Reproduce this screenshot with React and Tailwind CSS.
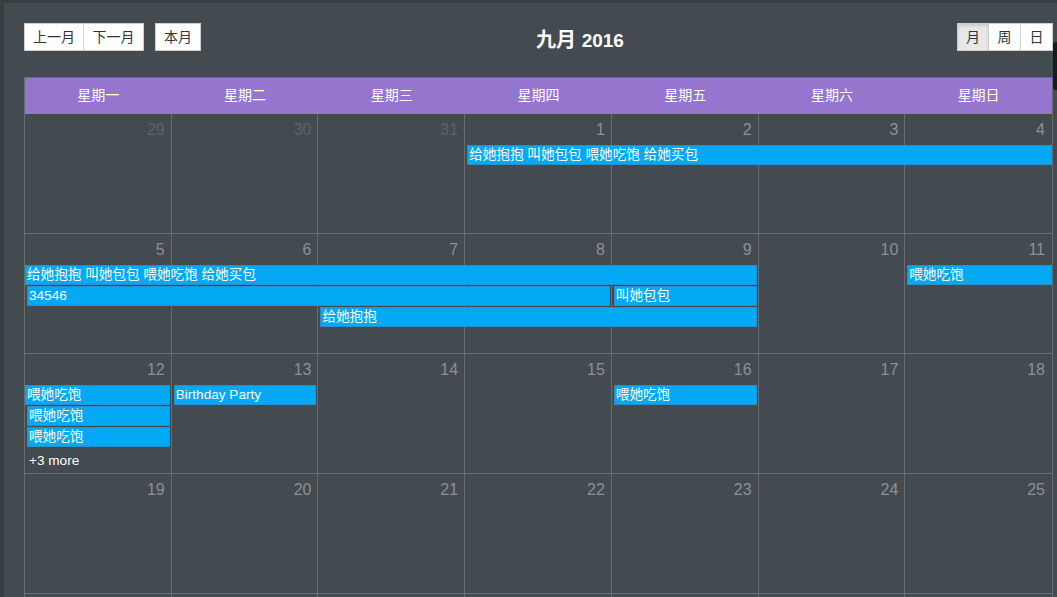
const font = { fontFamily: '"Liberation Sans", "Noto Sans CJK SC", sans-serif' }

const weeks = [
  {
    days: [29, 30, 31, 1, 2, 3, 4],
    other: [true, true, true, false, false, false, false],
    events: [
      { title: '给她抱抱 叫她包包 喂她吃饱 给她买包', cls: 'col-start-4 col-span-4 row-start-2 ml-[2px]' },
    ],
  },
  {
    days: [5, 6, 7, 8, 9, 10, 11],
    other: [],
    events: [
      { title: '给她抱抱 叫她包包 喂她吃饱 给她买包', cls: 'col-start-1 col-span-5 row-start-2 mr-[2px]' },
      { title: '34546', cls: 'col-start-1 col-span-4 row-start-3 mx-[2px]' },
      { title: '叫她包包', cls: 'col-start-5 col-span-1 row-start-3 mx-[2px]' },
      { title: '给她抱抱', cls: 'col-start-3 col-span-3 row-start-4 mx-[2px]' },
      { title: '喂她吃饱', cls: 'col-start-7 col-span-1 row-start-2 ml-[2px]' },
    ],
  },
  {
    days: [12, 13, 14, 15, 16, 17, 18],
    other: [],
    events: [
      { title: '喂她吃饱', cls: 'col-start-1 col-span-1 row-start-2 mr-[2px]' },
      { title: '喂她吃饱', cls: 'col-start-1 col-span-1 row-start-3 mx-[2px]' },
      { title: '喂她吃饱', cls: 'col-start-1 col-span-1 row-start-4 mx-[2px]' },
      { title: 'Birthday Party', cls: 'col-start-2 col-span-1 row-start-2 mx-[2px]' },
      { title: '喂她吃饱', cls: 'col-start-5 col-span-1 row-start-2 mx-[2px]' },
    ],
    more: true,
  },
  { days: [19, 20, 21, 22, 23, 24, 25], other: [], events: [] },
  // last week is cut off by the window, only its top line shows
  { days: ['', '', '', '', '', '', ''], other: [], events: [] },
]

const colStart = ['col-start-1', 'col-start-2', 'col-start-3', 'col-start-4', 'col-start-5', 'col-start-6', 'col-start-7']
const dayNames = ['星期一', '星期二', '星期三', '星期四', '星期五', '星期六', '星期日']

function Btn({ children, active, className = '' }) {
  return (
    <button
      className={`h-[28px] border border-[#cfcfcf] text-[14px] text-[#333] leading-none flex items-center justify-center ${
        active ? 'bg-[#e8e8e8] shadow-[inset_0_2px_3px_rgba(0,0,0,0.12)]' : 'bg-white'
      } ${className}`}
    >
      {children}
    </button>
  )
}

export default function App() {
  return (
    <div className="relative w-[1057px] h-[597px] overflow-hidden bg-[#383e40] pt-[3px] pl-[4px]" style={font}>
      <div className="h-full bg-[#434a50] pt-[20px] pl-[20px] pr-[4px]">
        {/* Toolbar */}
        <div className="flex items-center h-[28px] mb-[26px]">
          <div className="flex items-center gap-[11px]">
            <div className="flex">
              <Btn className="w-[60px]">上一月</Btn>
              <Btn className="w-[61px] -ml-px">下一月</Btn>
            </div>
            <Btn className="w-[46px]">本月</Btn>
          </div>
          <div className="flex-1 text-center text-white text-[20px] font-bold pl-[2px] mt-[6px]">
            九月 <span className="font-semibold text-[19px]">2016</span>
          </div>
          <div className="flex">
            <Btn active className="w-[32px]">月</Btn>
            <Btn className="w-[33px] -ml-px">周</Btn>
            <Btn className="w-[33px] -ml-px">日</Btn>
          </div>
        </div>

        {/* Calendar */}
        <div className="border-l border-t border-r border-[#656c72]">
          <div className="grid grid-cols-7 h-[35px] bg-[#9575cd] items-center text-white text-[14px] text-center">
            {dayNames.map((d) => (
              <div key={d}>{d}</div>
            ))}
          </div>
          {weeks.map((w, wi) => (
            <div
              key={wi}
              className={`grid grid-cols-7 grid-rows-[31px_21px_21px_21px_1fr] h-[120px] ${
                wi === 0 ? 'border-t border-[#9575cd]' : 'border-t border-[#656c72]'
              }`}
            >
              {w.days.map((d, i) => (
                <div
                  key={i}
                  className={`${colStart[i]} row-span-full ${i < 6 ? 'border-r border-[#656c72]' : ''}`}
                />
              ))}
              {w.days.map((d, i) => (
                <div
                  key={'n' + i}
                  className={`${colStart[i]} row-start-1 text-right pr-[7px] pt-[6px] text-[16px] leading-[20px] ${
                    w.other[i] ? 'text-[#5c6369]' : 'text-[#8b9197]'
                  }`}
                >
                  {d}
                </div>
              ))}
              {w.events.map((e, i) => (
                <div
                  key={'e' + i}
                  className={`${e.cls} self-start h-[20px] bg-[#03a9f4] border border-[#2a8fc9] text-white text-[13.6px] leading-[18px] pl-[1px] whitespace-nowrap overflow-hidden`}
                >
                  {e.title}
                </div>
              ))}
              {w.more && (
                <div className="col-start-1 row-start-5 pl-[4px] pt-[4px] text-white text-[13.6px] leading-[18px]">
                  +3 more
                </div>
              )}
            </div>
          ))}
        </div>
      </div>
      <div className="absolute right-0 top-[42px] w-[4px] h-[48px] bg-[#161a1b] rounded-l-[3px]" />
    </div>
  )
}
